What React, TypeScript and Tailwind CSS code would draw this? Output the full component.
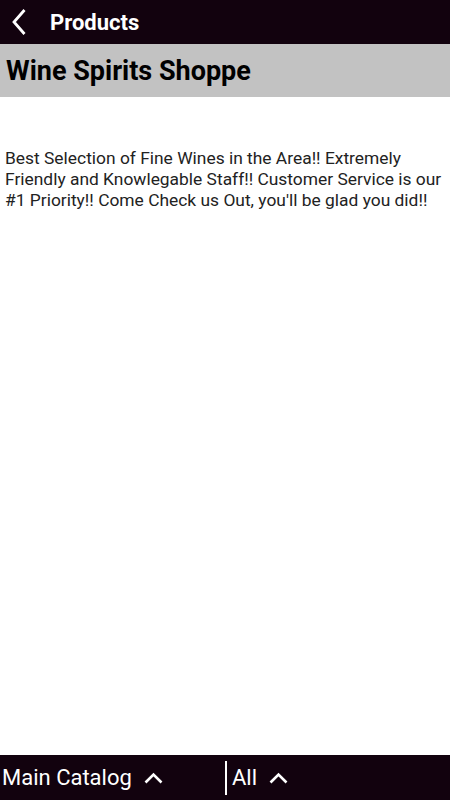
function UpArrow() {
  return (
    <svg width="19" height="12" viewBox="0 0 19 12" className="shrink-0">
      <path d="M1.5 10.5 L9.5 2.5 L17.5 10.5" fill="none" stroke="white" strokeWidth="2.6" />
    </svg>
  );
}

function BackArrow() {
  return (
    <svg width="14" height="26" viewBox="0 0 14 26" className="shrink-0">
      <path d="M12.5 1 L2 13 L12.5 25" fill="none" stroke="white" strokeWidth="2.8" />
    </svg>
  );
}

export default function App() {
  return (
    <div className="w-[450px] h-[800px] flex flex-col bg-white font-['Roboto',sans-serif]">
      <div className="h-[44px] bg-[#12020e] flex items-center shrink-0 pl-[12px]">
        <BackArrow />
        <span className="text-white text-[22px] font-bold ml-[24px]">Products</span>
      </div>
      <div className="h-[53px] bg-[#c2c2c2] flex items-center px-[6px] shrink-0">
        <h1 className="text-[27px] font-bold text-black pt-[2px]">Wine Spirits Shoppe</h1>
      </div>
      <div className="flex-1 pl-[5px] pt-[51px]">
        <p className="text-[17.4px] leading-[21px] text-[#222]">
          Best Selection of Fine Wines in the Area!! Extremely Friendly and Knowlegable Staff!! Customer Service is our #1 Priority!! Come Check us Out, you'll be glad you did!!
        </p>
      </div>
      <div className="h-[45px] bg-[#12020e] flex items-center shrink-0 text-white text-[22px]">
        <div className="w-[225px] flex items-center gap-[12px] pl-[2px]">
          <span>Main Catalog</span>
          <UpArrow />
        </div>
        <div className="h-[34px] w-[2px] bg-white" />
        <div className="flex items-center gap-[12px] pl-[5px]">
          <span>All</span>
          <UpArrow />
        </div>
      </div>
    </div>
  );
}
